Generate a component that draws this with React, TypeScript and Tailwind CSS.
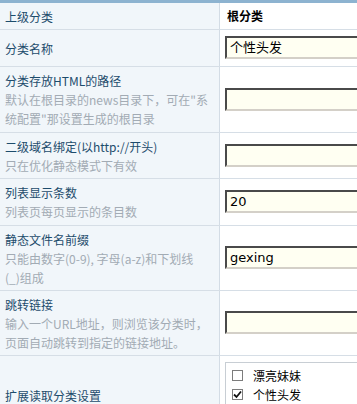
import type { ReactNode } from 'react'

const font = { fontFamily: '"Noto Sans CJK SC", "Liberation Sans", sans-serif' }

type RowProps = {
  title: string
  desc?: ReactNode
  tight?: boolean
  children: ReactNode
}

function Row({ title, desc, tight, children }: RowProps) {
  return (
    <div className="flex border-b border-[#d6dee6]">
      <div
        className={
          tight
            ? 'w-[220px] shrink-0 flex flex-col justify-center bg-[#f1f6fa] border-r border-[#d3dce5] px-[5px] pt-[4px] pb-[3px] text-[12px] leading-[19px]'
            : 'w-[220px] shrink-0 flex flex-col justify-center bg-[#f1f6fa] border-r border-[#d3dce5] px-[5px] py-[4px] text-[12px] leading-[19px]'
        }
      >
        <div className="text-[#1d4c6c]">{title}</div>
        {desc && <div className="text-[#a2abb4]">{desc}</div>}
      </div>
      <div className="flex-1 flex items-center pl-[5px] pt-[6px] pb-[7px] bg-white min-w-0">
        {children}
      </div>
    </div>
  )
}

function TextField({ value = '' }: { value?: string }) {
  return (
    <div
      className="w-[220px] h-[23px] shrink-0 flex items-center pl-[3px] bg-[#fffff2] border-2 border-t-[#4a4a4a] border-l-[#4a4a4a] border-b-[#d4d0c8] border-r-[#d4d0c8] text-[13px] text-black"
      style={{ fontFamily: '"DejaVu Sans", "Noto Sans CJK SC", sans-serif' }}
    >
      {value}
    </div>
  )
}

function Check({ checked, label }: { checked?: boolean; label: string }) {
  return (
    <div className="flex items-center h-[19px]">
      <span className="w-[11px] h-[11px] ml-[6px] border border-[#7c7c7c] bg-white flex items-center justify-center">
        {checked && (
          <svg width="9" height="9" viewBox="0 0 9 9">
            <path d="M1 4.5 L3.5 7 L8 1.5" stroke="#111" strokeWidth="1.8" fill="none" />
          </svg>
        )}
      </span>
      <span className="ml-[10px] text-[12px] text-black">{label}</span>
    </div>
  )
}

export default function App() {
  return (
    <div className="w-[357px] h-[404px] overflow-hidden bg-white" style={font}>
      <div className="h-[3px] bg-[#8db3d0]" />
      <div className="flex border-b border-[#d6dee6]">
        <div className="w-[220px] shrink-0 bg-[#f1f6fa] border-r border-[#d3dce5] px-[5px] pt-[4px] pb-[3px] text-[12px] leading-[19px] text-[#1d4c6c]">
          上级分类
        </div>
        <div className="flex-1 flex items-center pl-[7px] text-[12px] font-bold text-black">
          根分类
        </div>
      </div>
      <Row title="分类名称">
        <TextField value="个性头发" />
      </Row>
      <Row
        title="分类存放HTML的路径"
        desc={
          <>
            默认在根目录的news目录下，可在"系
            <br />
            统配置"那设置生成的根目录
          </>
        }
      >
        <TextField />
      </Row>
      <Row tight title="二级域名绑定(以http://开头)" desc="只在优化静态模式下有效">
        <TextField />
      </Row>
      <Row title="列表显示条数" desc="列表页每页显示的条目数">
        <TextField value="20" />
      </Row>
      <Row
        tight
        title="静态文件名前缀"
        desc={
          <>
            只能由数字(0-9), 字母(a-z)和下划线
            <br />
            (_)组成
          </>
        }
      >
        <TextField value="gexing" />
      </Row>
      <Row
        tight
        title="跳转链接"
        desc={
          <>
            输入一个URL地址，则浏览该分类时，
            <br />
            页面自动跳转到指定的链接地址。
          </>
        }
      >
        <TextField />
      </Row>
      <Row title="扩展读取分类设置">
        <div className="w-[220px] h-[66px] shrink-0 border border-[#c8ced4] pt-[3px] bg-white">
          <Check label="漂亮妹妹" />
          <Check checked label="个性头发" />
        </div>
      </Row>
    </div>
  )
}
